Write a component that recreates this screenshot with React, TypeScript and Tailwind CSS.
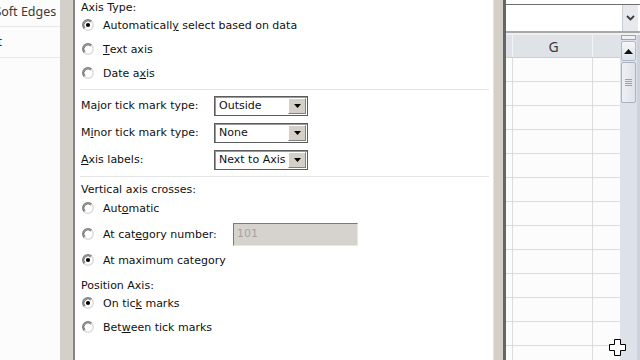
import React from "react";

function Radio({ checked }: { checked?: boolean }) {
  return (
    <svg width="12" height="12" viewBox="0 0 12 12" className="shrink-0">
      <circle cx="6" cy="6" r="5.2" fill="#fff" />
      <path d="M2.3 9.7 A5.2 5.2 0 0 1 9.7 2.3" stroke="#808080" strokeWidth="1.5" fill="none" />
      <path d="M9.7 2.3 A5.2 5.2 0 0 1 2.3 9.7" stroke="#dedbd5" strokeWidth="1.5" fill="none" />
      <path d="M3.1 8.9 A4.1 4.1 0 0 1 8.9 3.1" stroke="#505050" strokeWidth="0.8" fill="none" />
      {checked && <circle cx="6" cy="6" r="2.1" fill="#000" />}
    </svg>
  );
}

function RadioRow({ checked, h, children }: { checked?: boolean; h: "24" | "26"; children: React.ReactNode }) {
  return (
    <div className={`flex items-center gap-[9px] pl-[1px] ${h === "24" ? "h-[24px]" : "h-[26px]"}`}>
      <Radio checked={checked} />
      <div className="flex items-center whitespace-nowrap pt-[3px]">{children}</div>
    </div>
  );
}

function Select({ value }: { value: string }) {
  return (
    <div className="flex h-[20px] w-[94px] border border-[#5c5c5c] bg-white shadow-[inset_1px_1px_0_#9a9a9a]">
      <div className="flex-1 whitespace-nowrap pl-[4px] leading-[18px]">{value}</div>
      <div className="my-[1px] mr-[1px] flex w-[18px] items-center justify-center border border-t-white border-l-white border-r-[#808080] border-b-[#808080] bg-[#d4d0c8]">
        <svg width="7" height="4" viewBox="0 0 7 4">
          <path d="M0 0H7L3.5 4Z" fill="#000" />
        </svg>
      </div>
    </div>
  );
}

function SelectRow({ label, value, first }: { label: React.ReactNode; value: string; first?: boolean }) {
  return (
    <div className={`flex h-[20px] items-center ${first ? "mt-[6px]" : "mt-[7px]"}`}>
      <div className="w-[133px] whitespace-nowrap">{label}</div>
      <Select value={value} />
    </div>
  );
}

export default function App() {
  const rows = Array.from({ length: 13 });
  return (
    <div className="relative flex h-[360px] w-[640px] overflow-hidden bg-white">
      {/* left category list */}
      <div className="w-[61px] shrink-0 overflow-hidden border-r border-[#cfcfcf] bg-[#fcfcfc] font-['Noto_Sans',sans-serif] text-[12.5px] text-[#3a3a3a]">
        <div className="flex h-[27px] items-center border-b border-[#e8e8e8] pb-[2px]">
          <span className="-ml-[64px] shrink-0 whitespace-nowrap">Glow and Soft Edges</span>
        </div>
        <div className="flex h-[31px] items-center border-b border-[#e8e8e8] pt-[1px]">
          <span className="-ml-[64px] shrink-0 whitespace-nowrap">3-D Format</span>
        </div>
      </div>
      <div className="w-[12px] shrink-0 bg-[#d4d0c8]" />
      <div className="w-[2px] shrink-0 bg-[#858585]" />

      {/* axis options */}
      <div className="flex w-[419px] shrink-0 flex-col border-r border-[#e2e2e2] bg-white pl-[6px] pr-[4px] font-['DejaVu_Sans',sans-serif] text-[11px] text-[#111]">
        <div className="h-[13px] pt-[1px] leading-[13px]">Axis Type:</div>
        <RadioRow checked h="24">
          Automaticall<u>y</u>&nbsp;select based on data
        </RadioRow>
        <RadioRow h="24">
          <u>T</u>ext axis
        </RadioRow>
        <RadioRow h="24">
          Date a<u>x</u>is
        </RadioRow>
        <div className="-ml-[1px] mt-[4px] h-[1px] bg-[#e6e6e6]" />

        <SelectRow first label="Major tick mark type:" value="Outside" />
        <SelectRow
          label={
            <>
              M<u>i</u>nor tick mark type:
            </>
          }
          value="None"
        />
        <SelectRow
          label={
            <>
              <u>A</u>xis labels:
            </>
          }
          value="Next to Axis"
        />
        <div className="-ml-[1px] mt-[6px] h-[1px] bg-[#e6e6e6]" />

        <div className="mt-[4px] h-[14px] pt-[2px] leading-[14px]">Vertical axis crosses:</div>
        <RadioRow h="26">
          Aut<u>o</u>matic
        </RadioRow>
        <div className="flex h-[26px] items-center gap-[9px] pl-[1px]">
          <Radio />
          <span className="w-[121px] whitespace-nowrap pt-[3px]">
            At cat<u>e</u>gory number:
          </span>
          <div className="flex h-[23px] w-[125px] items-center border border-t-[#7a7a7a] border-l-[#7a7a7a] border-r-[#e6e6e6] border-b-[#e6e6e6] bg-[#d6d3ce] pl-[3px] pt-[1px] text-[#a3a3a3]">
            101
          </div>
        </div>
        <RadioRow checked h="26">
          At maximum category
        </RadioRow>

        <div className="mt-[4px] h-[14px] pt-[2px] leading-[14px]">Position Axis:</div>
        <RadioRow checked h="24">
          On tic<u>k</u>&nbsp;marks
        </RadioRow>
        <RadioRow h="24">
          Bet<u>w</u>een tick marks
        </RadioRow>
      </div>
      <div className="w-[9px] shrink-0 bg-[#d4d0c8]" />
      <div className="w-[3px] shrink-0 bg-[#666]" />

      {/* spreadsheet behind */}
      <div className="flex w-[134px] shrink-0 flex-col bg-white">
        <div className="h-[5px] shrink-0 border-b border-[#6e6e6e]" />
        <div className="flex h-[28px] shrink-0 border-b-2 border-[#a8a8a8]">
          <div className="flex-1 bg-white" />
          <div className="mr-[2px] flex w-[16px] items-center justify-center border-l border-[#c8cdd4] bg-[#e6e9ee]">
            <svg width="9" height="6" viewBox="0 0 9 6">
              <path d="M1 1L4.5 4.5L8 1" stroke="#3c3c3c" strokeWidth="1.8" fill="none" />
            </svg>
          </div>
        </div>
        <div className="h-[2px] shrink-0 bg-[#eef0f3]" />
        <div className="flex min-h-0 flex-1 overflow-hidden">
          <div className="flex w-[114px] shrink-0 flex-col">
            <div className="flex h-[23px] shrink-0 border-b border-[#c9ced6] bg-[#dfe3e8] font-['Noto_Sans',sans-serif] text-[14px] text-[#3a3a3a]">
              <div className="w-[7px] border-r border-[#f2f3f5]" />
              <div className="flex w-[80px] items-center justify-center border-r border-[#f2f3f5] pl-[2px]">G</div>
              <div className="flex-1" />
            </div>
            {rows.map((_, i) => (
              <div key={i} className="flex h-[24px] shrink-0 border-b border-[#dadcdd] bg-[#fcfcfc]">
                <div className="w-[7px] border-r border-[#dadcdd]" />
                <div className="w-[80px] border-r border-[#dadcdd]" />
                <div className="flex-1" />
              </div>
            ))}
          </div>
          <div className="flex w-[17px] shrink-0 flex-col bg-[#dde1e9]">
            <div className="mx-[1px] h-[5px] shrink-0 border border-[#9aa4b4] bg-[#eef0f4]" />
            <div className="mx-[1px] mt-[1px] flex h-[20px] shrink-0 items-center justify-center rounded-[2px] border border-[#b3bac6] bg-gradient-to-b from-[#f5f6f8] to-[#dde2ea]">
              <svg width="9" height="5" viewBox="0 0 9 5">
                <path d="M0 5H9L4.5 0Z" fill="#111" />
              </svg>
            </div>
            <div className="mx-[1px] mt-[1px] flex h-[41px] shrink-0 items-center justify-center rounded-[2px] border border-[#aab2c0] bg-gradient-to-r from-[#eef0f4] to-[#dfe3ea]">
              <svg width="7" height="7" viewBox="0 0 7 7">
                <path d="M0 0.5H7M0 2.5H7M0 4.5H7M0 6.5H7" stroke="#9aa1ac" strokeWidth="1" />
              </svg>
            </div>
          </div>
          <div className="w-[3px] shrink-0 bg-[#cdd2db]" />
        </div>
      </div>

      {/* cell cursor */}
      <svg className="absolute left-[609px] top-[339px]" width="17" height="17" viewBox="0 0 17 17">
        <path d="M5.5 0.5h6v5h5v6h-5v5h-6v-5h-5v-6h5z" fill="#fff" stroke="#000" />
      </svg>
    </div>
  );
}
